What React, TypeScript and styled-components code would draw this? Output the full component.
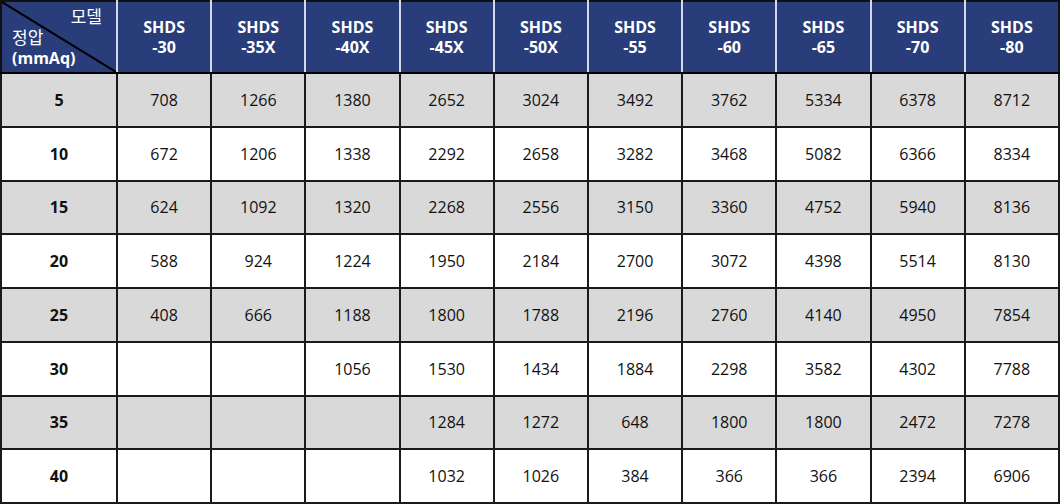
import React from "react";
import styled, { createGlobalStyle } from "styled-components";

const GlobalStyle = createGlobalStyle`
  body {
    margin: 0;
    background: #ffffff;
    font-family: "Open Sans", "Noto Sans CJK KR", sans-serif;
  }
`;

const Table = styled.table`
  width: 1060px;
  height: 504px;
  border-collapse: collapse;
  table-layout: fixed;
  font-family: "Open Sans", "Noto Sans CJK KR", sans-serif;
`;

const HeadCell = styled.th`
  height: 69px;
  padding: 0 0 1px;
  background-color: #293d7a;
  color: #ffffff;
  font-size: 16px;
  font-weight: 700;
  line-height: 20px;
  text-align: center;
  border-top: 2px solid #111;
  border-bottom: 2px solid #000;
  border-right: 2px solid #d4d8ea;

  &:last-child {
    border-right: 2px solid #111;
  }
`;

const CornerCell = styled(HeadCell)`
  position: relative;
  border-left: 2px solid #111;
  text-align: left;
  vertical-align: top;
`;

const Diagonal = styled.svg`
  position: absolute;
  left: 0;
  top: 0;
  width: 100%;
  height: 100%;
`;

const CornerTop = styled.div`
  position: absolute;
  right: 14px;
  top: 5px;
  font-size: 17px;
  font-weight: 400;
`;

const CornerBottom = styled.div`
  position: absolute;
  left: 10px;
  top: 26px;
  line-height: 20px;
`;

const KoreanLabel = styled.span`
  font-size: 17px;
  font-weight: 400;
`;

const Row = styled.tr<{ $shade: boolean }>`
  background-color: ${(p) => (p.$shade ? "#d9d9d9" : "#ffffff")};
`;

const Cell = styled.td<{ $head?: boolean }>`
  height: 51px;
  padding: 0;
  text-align: center;
  font-size: 16px;
  font-weight: ${(p) => (p.$head ? 700 : 400)};
  color: #111;
  border: 2px solid #1a1a1a;
  border-top-width: 1px;
  border-bottom-width: 2px;
`;

const models = [
  "-30",
  "-35X",
  "-40X",
  "-45X",
  "-50X",
  "-55",
  "-60",
  "-65",
  "-70",
  "-80",
];

const rows: [string, string[]][] = [
  ["5", ["708", "1266", "1380", "2652", "3024", "3492", "3762", "5334", "6378", "8712"]],
  ["10", ["672", "1206", "1338", "2292", "2658", "3282", "3468", "5082", "6366", "8334"]],
  ["15", ["624", "1092", "1320", "2268", "2556", "3150", "3360", "4752", "5940", "8136"]],
  ["20", ["588", "924", "1224", "1950", "2184", "2700", "3072", "4398", "5514", "8130"]],
  ["25", ["408", "666", "1188", "1800", "1788", "2196", "2760", "4140", "4950", "7854"]],
  ["30", ["", "", "1056", "1530", "1434", "1884", "2298", "3582", "4302", "7788"]],
  ["35", ["", "", "", "1284", "1272", "648", "1800", "1800", "2472", "7278"]],
  ["40", ["", "", "", "1032", "1026", "384", "366", "366", "2394", "6906"]],
];

export default function App() {
  return (
    <>
      <GlobalStyle />
      <Table>
        <colgroup>
          <col style={{ width: 116 }} />
          {models.map((m) => (
            <col key={m} />
          ))}
        </colgroup>
        <thead>
          <tr>
            <CornerCell>
              <Diagonal viewBox="0 0 100 100" preserveAspectRatio="none">
                <line
                  x1="0"
                  y1="0"
                  x2="100"
                  y2="100"
                  stroke="#000"
                  strokeWidth="2"
                  vectorEffect="non-scaling-stroke"
                />
              </Diagonal>
              <CornerTop>모델</CornerTop>
              <CornerBottom>
                <KoreanLabel>정압</KoreanLabel>
                <br />
                (mmAq)
              </CornerBottom>
            </CornerCell>
            {models.map((m) => (
              <HeadCell key={m}>
                SHDS
                <br />
                {m}
              </HeadCell>
            ))}
          </tr>
        </thead>
        <tbody>
          {rows.map(([pressure, values], i) => (
            <Row key={pressure} $shade={i % 2 === 0}>
              <Cell $head>{pressure}</Cell>
              {values.map((v, j) => (
                <Cell key={j}>{v}</Cell>
              ))}
            </Row>
          ))}
        </tbody>
      </Table>
    </>
  );
}
